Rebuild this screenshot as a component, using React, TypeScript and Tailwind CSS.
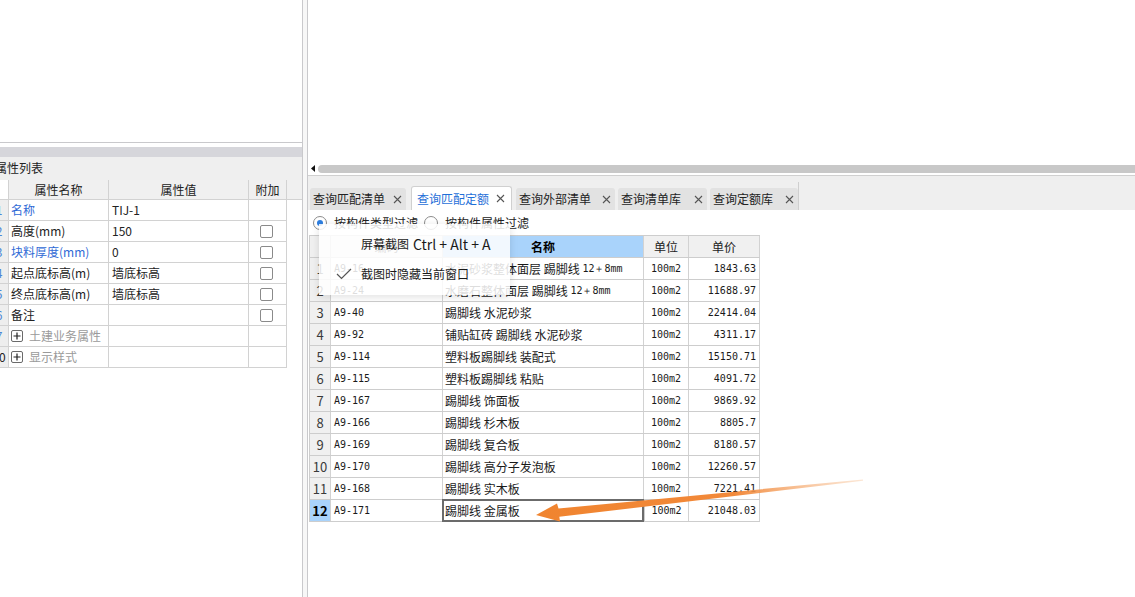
import type { ReactNode } from 'react';

const CJK = "font-['Noto_Sans_CJK_SC','Noto_Sans',sans-serif]";
const MONO = "font-['DejaVu_Sans_Mono','Liberation_Mono',monospace]";

type Prop = { no: string; name: string; value?: string; blue?: boolean; check?: boolean; group?: boolean };

const props: Prop[] = [
  { no: '1', name: '名称', value: 'TIJ-1', blue: true },
  { no: '2', name: '高度(mm)', value: '150', check: true },
  { no: '3', name: '块料厚度(mm)', value: '0', blue: true, check: true },
  { no: '4', name: '起点底标高(m)', value: '墙底标高', check: true },
  { no: '5', name: '终点底标高(m)', value: '墙底标高', check: true },
  { no: '6', name: '备注', value: '', check: true },
  { no: '7', name: '土建业务属性', group: true },
  { no: '10', name: '显示样式', group: true },
];

const quotas: [string, string, string, string][] = [
  ['A9-16', '水泥砂浆整体面层 踢脚线 ', '12＋8mm', '1843.63'],
  ['A9-24', '水磨石整体面层 踢脚线 ', '12＋8mm', '11688.97'],
  ['A9-40', '踢脚线 水泥砂浆', '', '22414.04'],
  ['A9-92', '铺贴缸砖 踢脚线 水泥砂浆', '', '4311.17'],
  ['A9-114', '塑料板踢脚线 装配式', '', '15150.71'],
  ['A9-115', '塑料板踢脚线 粘贴', '', '4091.72'],
  ['A9-167', '踢脚线 饰面板', '', '9869.92'],
  ['A9-166', '踢脚线 杉木板', '', '8805.7'],
  ['A9-169', '踢脚线 复合板', '', '8180.57'],
  ['A9-170', '踢脚线 高分子发泡板', '', '12260.57'],
  ['A9-168', '踢脚线 实木板', '', '7221.41'],
  ['A9-171', '踢脚线 金属板', '', '21048.03'],
];

// label plus its width in the strip
const tabs: { label: string; w: string; ml: string }[] = [
  { label: '查询匹配清单', w: 'w-[96px]', ml: 'ml-0' },
  { label: '查询匹配定额', w: 'w-[101px]', ml: 'ml-[5px]' },
  { label: '查询外部清单', w: 'w-[99px]', ml: 'ml-[4px]' },
  { label: '查询清单库', w: 'w-[89px]', ml: 'ml-[3px]' },
  { label: '查询定额库', w: 'w-[88px]', ml: 'ml-[3px]' },
];

function CloseX() {
  return (
    <svg width="9" height="9" viewBox="0 0 9 9" className="shrink-0">
      <path d="M1 1 L8 8 M8 1 L1 8" stroke="#555" strokeWidth="1.1" />
    </svg>
  );
}

function Checkbox() {
  return <div className="h-[13px] w-[13px] rounded-[2px] border border-[#8a8a8a] bg-white" />;
}

function PlusBox() {
  return (
    <div className="flex h-[12px] w-[12px] items-center justify-center rounded-[2px] border border-[#6a6a6a] bg-white">
      <svg width="8" height="8" viewBox="0 0 8 8">
        <path d="M4 0.5 V7.5 M0.5 4 H7.5" stroke="#222" strokeWidth="1.2" />
      </svg>
    </div>
  );
}

function Radio({ checked }: { checked?: boolean }) {
  return (
    <div className="flex h-[14px] w-[14px] items-center justify-center rounded-full border border-[#8c8c8c] bg-white">
      {checked ? <div className="h-[6px] w-[6px] rounded-full bg-[#2d7ee0]" /> : null}
    </div>
  );
}

function Cell({ w, className = '', children }: { w: string; className?: string; children?: ReactNode }) {
  return <div className={`flex h-full shrink-0 items-center border-r border-[#d2d2d2] ${w} ${className}`}>{children}</div>;
}

function PropertyPanel() {
  return (
    <div className="flex w-[303px] shrink-0 flex-col border-r border-[#c9c9cc]">
      <div className="h-[143px] border-b border-[#c9c9cc] bg-white" />
      <div className="h-[4px] bg-white" />
      <div className="h-[10px] bg-[#d6d6db]" />
      <div className="flex h-[21px] items-center bg-[#efefef] text-[12px] text-[#222]">
        <span className="ml-[-5px]">属性列表</span>
      </div>
      <div className="h-[2px] bg-[#efefef]" />

      <div className="flex h-[20px] border-b border-[#d2d2d2] bg-[#f0f0f0] text-[12px] text-[#222]">
        <Cell w="w-[9px]" className="bg-white" />
        <Cell w="w-[100px]" className="justify-center">属性名称</Cell>
        <Cell w="w-[140px]" className="justify-center">属性值</Cell>
        <Cell w="w-[38px]" className="justify-center">附加</Cell>
      </div>

      {props.map((p) => (
        <div key={p.no} className="flex h-[21px] w-[287px] border-b border-[#d2d2d2] text-[12px]">
          <Cell w="w-[9px]" className="overflow-hidden bg-[#eeeeee]">
            <div className={`ml-[-11px] w-[20px] shrink-0 text-center ${p.no === '10' ? 'text-[#222]' : 'text-[#4a86d6]'}`}>
              {p.no}
            </div>
          </Cell>
          <Cell w="w-[100px]" className="gap-[6px] pl-[2px]">
            {p.group ? (
              <>
                <PlusBox />
                <span className="text-[#9a9a9a]">{p.name}</span>
              </>
            ) : (
              <span className={p.blue ? 'text-[#2f6ad6]' : 'text-[#222]'}>{p.name}</span>
            )}
          </Cell>
          <Cell w="w-[140px]" className="pl-[3px] text-[#222]">
            {p.value}
          </Cell>
          <Cell w="w-[38px]" className="justify-center pr-[2px]">
            {p.check ? <Checkbox /> : null}
          </Cell>
        </div>
      ))}
      <div className="flex-1 bg-white" />
    </div>
  );
}

function QuotaTable() {
  return (
    <div className="ml-px w-[451px] border-t border-l border-[#cdcdcd]">
      <div className="flex h-[22px] border-b border-[#cdcdcd] text-[12px] text-[#222]">
        <Cell w="w-[21px]" className="bg-[#f0f0f0]" />
        <Cell w="w-[112px]" className="justify-center bg-[#f0f0f0]">编码</Cell>
        <Cell w="w-[201px]" className="justify-center bg-[#a9d3fb] font-semibold text-black">名称</Cell>
        <Cell w="w-[45px]" className="justify-center bg-[#f0f0f0]">单位</Cell>
        <Cell w="w-[71px]" className="justify-center bg-[#f0f0f0]">单价</Cell>
      </div>
      {quotas.map(([code, name, spec, price], i) => {
        const selected = i === quotas.length - 1;
        const nameContent = (
          <>
            <span className="whitespace-pre">{name}</span>
            {spec ? <span className={`${MONO} text-[10px]`}>{spec}</span> : null}
          </>
        );
        return (
          <div key={code} className="flex h-[22px] border-b border-[#cdcdcd] text-[12px] text-[#1a1a1a]">
            <Cell
              w="w-[21px]"
              className={`justify-center text-[13px] ${selected ? 'bg-[#a9d3fb] font-bold text-black' : 'bg-[#f0f0f0] text-[#3a3a3a]'}`}
            >
              {i + 1}
            </Cell>
            <Cell w="w-[112px]" className={`pl-[3px] ${MONO} text-[10px]`}>
              {code}
            </Cell>
            {selected ? (
              <div className="-mt-px -ml-px flex h-[23px] w-[202px] shrink-0 items-center outline-2 -outline-offset-2 outline-[#6b6b6b] pl-[3px]">
                {nameContent}
              </div>
            ) : (
              <Cell w="w-[201px]" className="pl-[2px]">
                {nameContent}
              </Cell>
            )}
            <Cell w="w-[45px]" className={`justify-center ${MONO} text-[10px] ${selected ? 'border-l border-l-[#cdcdcd]' : ''}`}>
              100m2
            </Cell>
            <Cell w="w-[71px]" className={`justify-end pr-[3px] ${MONO} text-[10px]`}>
              {price}
            </Cell>
          </div>
        );
      })}
    </div>
  );
}

function QueryPanel() {
  return (
    <div className="flex min-w-0 flex-1 flex-col border-l border-[#c9c9cc]">
      <div className="h-[162px] bg-white" />
      <div className="flex h-[13px] items-center bg-white pl-[3px]">
        <svg width="4" height="7" viewBox="0 0 4 7" className="shrink-0">
          <path d="M4 0 L0 3.5 L4 7 Z" fill="#111" />
        </svg>
        <div className="ml-[3px] h-[8px] flex-1 rounded-l-full bg-[#c8c8c8]" />
      </div>
      <div className="h-px bg-[#d0d0d0]" />
      <div className="flex h-[34px] items-end bg-[#efefef] pl-[2px]">
        {tabs.map((t, i) => {
          const active = i === 1;
          return (
            <div
              key={t.label}
              className={`flex items-center justify-between rounded-t-[3px] text-[12px] ${t.w} ${t.ml} ${
                active
                  ? 'h-[24px] border-x border-t border-[#d0d0d0] bg-white pl-[5px] pr-[6px] text-[#1f6fd8]'
                  : 'h-[22px] bg-[#e2e2e2] pl-[3px] pr-[4px] text-[#222]'
              }`}
            >
              <span>{t.label}</span>
              <CloseX />
            </div>
          );
        })}
        <div className="h-[28px] w-px bg-[#cfcfcf]" />
      </div>
      <div className="flex-1 bg-white">
        <div className="flex h-[25px] items-center pl-[5px] text-[12px] text-[#222]">
          <Radio checked />
          <span className="ml-[7px]">按构件类型过滤</span>
          <div className="ml-[6px]">
            <Radio />
          </div>
          <span className="ml-[7px]">按构件属性过滤</span>
        </div>
        <QuotaTable />
      </div>
    </div>
  );
}

export default function App() {
  return (
    <div className={`relative flex h-[597px] w-[1135px] overflow-hidden bg-white ${CJK}`}>
      <PropertyPanel />
      <div className="w-[4px] shrink-0 bg-[#f7f7f7]" />
      <QueryPanel />

      {/* screenshot tool popup, drawn over the table */}
      <div className="absolute left-[319px] top-[224px] flex h-[71px] w-[191px] flex-col bg-white/85 text-[12px] text-[#1a1a1a] shadow-[0_2px_8px_rgba(0,0,0,0.12)]">
        <div className="flex h-[40px] items-center pl-[42px]">
          屏幕截图 <span className="ml-[4px] text-[14px]">Ctrl + Alt + A</span>
        </div>
        <div className="flex h-[20px] items-center">
          <svg width="16" height="12" viewBox="0 0 16 12" className="ml-[17px]">
            <path d="M1 6 L5.5 10.5 L15 1" fill="none" stroke="#555" strokeWidth="1.2" />
          </svg>
          <span className="ml-[9px]">截图时隐藏当前窗口</span>
        </div>
      </div>

      {/* annotation arrow */}
      <svg className="pointer-events-none absolute left-0 top-0" width="1135" height="597" viewBox="0 0 1135 597">
        <defs>
          <linearGradient id="arrowFade" x1="537" y1="0" x2="865" y2="0" gradientUnits="userSpaceOnUse">
            <stop offset="0" stopColor="#f0842f" />
            <stop offset="0.6" stopColor="#f2893a" />
            <stop offset="1" stopColor="#f7c49a" stopOpacity="0.4" />
          </linearGradient>
        </defs>
        <polygon
          points="863,479.5 558.5,508.5 557,503.5 536,515 560,521.5 559.3,516.8 863,480.8"
          fill="url(#arrowFade)"
        />
      </svg>
    </div>
  );
}
